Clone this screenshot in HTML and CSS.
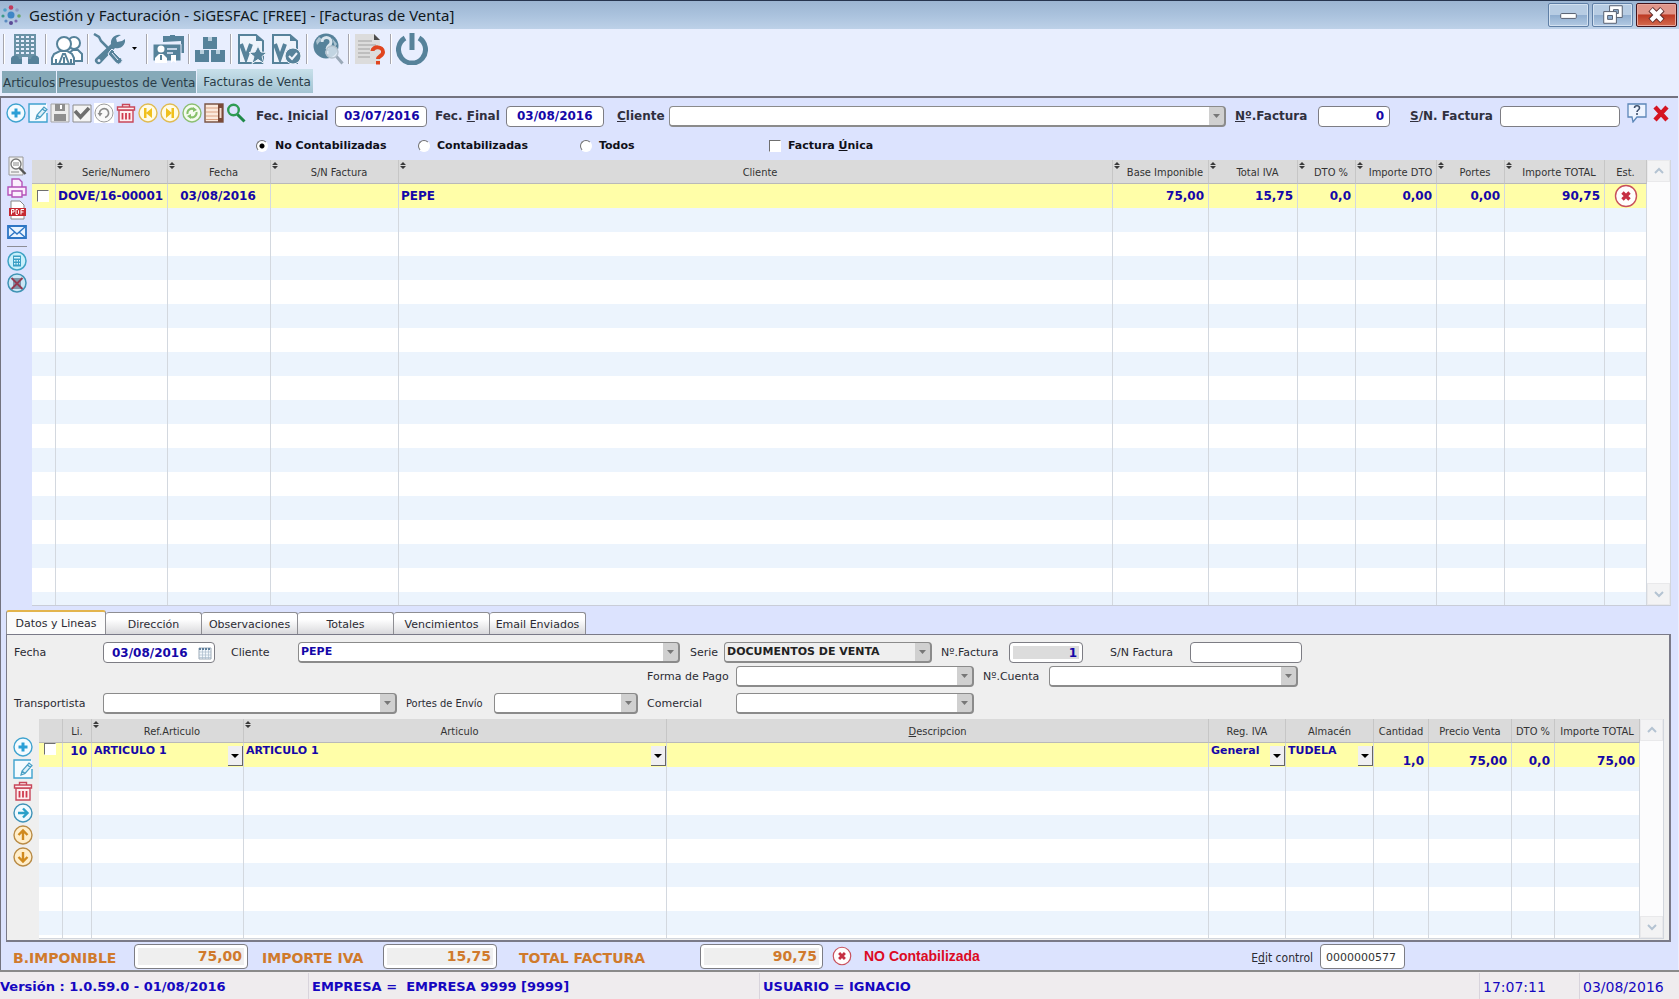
FILE: index.html
```html
<!DOCTYPE html>
<html lang="es">
<head>
<meta charset="utf-8">
<title>Gestión y Facturación - SiGESFAC</title>
<link rel="stylesheet" href="styles.css">
</head>
<body>
<svg class="defs" aria-hidden="true">
  <symbol id="add" viewBox="0 0 20 20"><circle cx="10" cy="10" r="9" fill="#f4fbff" stroke="#3fa3cf" stroke-width="1.4"/><path d="M10 5.500v9M5.500 10h9" stroke="#2b9fd6" stroke-width="3"/></symbol>
  <symbol id="edit" viewBox="0 0 20 20"><path d="M1 1h18v18H1z" fill="#f4fbff"/><path d="M19 10v9H1V1h17" fill="none" stroke="#3fa3cf" stroke-width="1.400"/><path d="M8 16l1-4 7-8 3 2.500-7 8zM9 12l3 2.500M14.500 6l3 2.500" fill="#dff1fa" stroke="#4a9fc4" stroke-width="1.200"/></symbol>
  <symbol id="trash" viewBox="0 0 20 20"><path d="M3 7h14v12H3z" fill="#fdeef0" stroke="#c8475a" stroke-width="1.400"/><path d="M1.500 4h17v3h-17zM6.500 4V1.500h7V4" fill="#fdeef0" stroke="#c8475a" stroke-width="1.400"/><path d="M6.500 10v6.500M10 10v6.500M13.500 10v6.500" stroke="#cf3a4e" stroke-width="1.800"/></symbol>
  <symbol id="nope" viewBox="0 0 24 24"><circle cx="12" cy="12" r="10.500" fill="#fffdfd" stroke="#c8505c" stroke-width="1.400"/><path d="M8.500 8.500l7 7M15.500 8.500l-7 7" stroke="#c62f42" stroke-width="3.400"/></symbol>
</svg>

<header class="titlebar">
  <svg class="logo" viewBox="0 0 20 20"><circle cx="10" cy="10" r="3.500" fill="#3f86c6"/><circle cx="10" cy="2.500" r="2.300" fill="#c23a5c"/><circle cx="10" cy="18" r="2" fill="#5a4a96"/><circle cx="4" cy="5" r="1.800" fill="#4ea0c8"/><circle cx="16" cy="5" r="1.800" fill="#8a9ac4"/><circle cx="2" cy="11" r="1.600" fill="#3c9a8a"/><circle cx="18" cy="11" r="1.800" fill="#6aa66a"/><circle cx="5" cy="16" r="1.600" fill="#5a8ac0"/><circle cx="15" cy="16" r="1.600" fill="#7c6ab0"/></svg>
  <h1 class="title">Gestión y Facturación - SiGESFAC [FREE] - [Facturas de Venta]</h1>
  <button class="win" aria-label="Minimizar"><svg viewBox="0 0 40 22"><rect x="12" y="9.500" width="16" height="5" rx="1" fill="#fff" stroke="#555e6e"/></svg></button>
  <button class="win" aria-label="Restaurar"><svg viewBox="0 0 40 22"><path d="M17 1.500h13v12H17z" fill="#fff" stroke="#555e6e"/><path d="M21 5.500h5v4h-5z" fill="#8fb0d2" stroke="#555e6e"/><path d="M11 7.500h13v12H11z" fill="#fff" stroke="#555e6e"/><path d="M15 11.500h5v4h-5z" fill="#8fb0d2" stroke="#555e6e"/></svg></button>
  <button class="win win-close" aria-label="Cerrar"><svg viewBox="0 0 40 22"><path d="M14 5l12 12M26 5L14 17" stroke="#5a2a2a" stroke-width="6.500"/><path d="M14.500 5.500l11 11M25.500 5.500l-11 11" stroke="#fff" stroke-width="4.400"/></svg></button>
</header>

<nav class="toolbar">
  <i class="sep"></i>
  <button class="tool" aria-label="Empresa"><svg viewBox="0 0 32 32"><path d="M5 1h22v27H5z" fill="#6a92a6"/><path d="M7 3h3v2H7zm5 0h3v2h-3zm5 0h3v2h-3zm5 0h3v2h-3zM7 7h3v2H7zm5 0h3v2h-3zm5 0h3v2h-3zm5 0h3v2h-3zM7 11h3v2H7zm5 0h3v2h-3zm5 0h3v2h-3zm5 0h3v2h-3zM7 15h3v2H7zm5 0h3v2h-3zm5 0h3v2h-3zm5 0h3v2h-3zM7 19h3v2H7zm5 0h3v2h-3zm5 0h3v2h-3zm5 0h3v2h-3zM13 24h6v4h-6z" fill="#e8eefe"/><path d="M2 31v-4a4 4 0 0 1 8-1h3v5zM30 31v-4a4 4 0 0 0-8-1h-3v5z" fill="#56829a"/></svg></button>
  <i class="sep"></i>
  <button class="tool" aria-label="Clientes"><svg viewBox="0 0 32 32" fill="#fff" stroke="#56829a" stroke-width="2"><path d="M16 28l2-8 4-3h5l4 4v7z"/><circle cx="23" cy="10" r="6"/><path d="M1 31v-6l2-4 6-3h7l5 3 2 4v6z"/><circle cx="13" cy="11" r="7"/><path d="M8 31l4-10 2 0 4 10M13 24v7M5 26v5M20 26v5" fill="none"/></svg></button>
  <i class="sep"></i>
  <button class="tool" aria-label="Herramientas"><svg viewBox="0 0 32 32"><path d="M29 8l-5 1-1-4 5-3a8 8 0 0 0-10 9L3 25a3.500 3.500 0 0 0 5 5l14-15a8 8 0 0 0 10-9zM6 29a1.500 1.500 0 1 1 0-3 1.500 1.500 0 0 1 0 3z" fill="#56829a"/><path d="M1 1l5 3 2 4 8 8" fill="none" stroke="#56829a" stroke-width="2.500"/><path d="M17 18l2-2 9 9a3.500 3.500 0 0 1-5 5l-8-9z" fill="#56829a" stroke="#e8eefe"/><path d="M19 20l6 7M21 19l6 6" stroke="#e8eefe"/></svg></button>
  <button class="drop" aria-label="Más herramientas"><svg viewBox="0 0 8 5"><path d="M1 0h5L3.500 3z"/></svg></button>
  <i class="sep"></i>
  <button class="tool" aria-label="Fichas"><svg viewBox="0 0 32 32"><path d="M11 9V3h7V2h5v1h9v17h-3V8z" fill="#56829a"/><path d="M1 11h28v17H1z" fill="#56829a" stroke="#e8eefe"/><path d="M15 16h10M15 20h6" stroke="#e8eefe" stroke-width="1.500"/><circle cx="9" cy="16" r="3.500" fill="#fff"/><path d="M3 30v-5l4-4h4l4 4v5zM19 22h5v8l-2.500-2L19 30z" fill="#fff"/><path d="M9 22v5" stroke="#56829a" stroke-width="2"/></svg></button>
  <i class="sep"></i>
  <button class="tool" aria-label="Artículos"><svg viewBox="0 0 32 32"><path d="M9 4h14v12H9zM1 17h14v12H1zM17 17h14v12H17z" fill="#56829a"/><path d="M14 4h4v4h-4zM6 17h4v4H6zM22 17h4v4h-4z" fill="#b9cfdd"/></svg></button>
  <i class="sep"></i>
  <button class="tool" aria-label="Presupuestos"><svg viewBox="0 0 32 32"><path d="M3 2h17l7 6v22H3z" fill="#edf3fb" stroke="#56829a" stroke-width="2"/><path d="M20 2v6h7" fill="#56829a"/><path d="M5 11l5 14 5-14" fill="none" stroke="#56829a" stroke-width="4"/><path d="M22 13l3 6 6 .5-5 4 2 7-6-4-6 4 2-7-5-4 6-.5z" fill="#56829a" stroke="#edf3fb"/></svg></button>
  <button class="tool" aria-label="Facturas"><svg viewBox="0 0 32 32"><path d="M3 2h17l7 6v22H3z" fill="#edf3fb" stroke="#56829a" stroke-width="2"/><path d="M20 2v6h7" fill="#56829a"/><path d="M5 11l5 14 5-14" fill="none" stroke="#56829a" stroke-width="4"/><circle cx="23" cy="23" r="8" fill="#56829a" stroke="#edf3fb"/><path d="M19 23l3 3 5-6" fill="none" stroke="#edf3fb" stroke-width="2"/></svg></button>
  <i class="sep"></i>
  <button class="tool" aria-label="Consultas"><svg viewBox="0 0 32 32"><circle cx="14" cy="13" r="12.500" fill="#56829a"/><path d="M4 8l3-4 3 2-5 6zM20 5l5 6-2 3z" fill="#a9c2d0"/><path d="M10 9c0-6 9-6 9 0 0 4-4 3-4 7M15 18v3" fill="none" stroke="#dbe6ee" stroke-width="3"/><circle cx="20" cy="19" r="6" fill="#dde9f2" fill-opacity=".8" stroke="#b7c4cf" stroke-width="1.500"/><path d="M24.500 23.500l6 7" stroke="#9aa9b8" stroke-width="3"/></svg></button>
  <i class="sep"></i>
  <button class="tool" aria-label="Ayuda"><svg viewBox="0 0 32 32"><path d="M1 1h19l6 6v24H1z" fill="#dcdcdc"/><path d="M20 1v6h6z" fill="#4c4c4c"/><path d="M4 8h14M4 12h18M4 16h12M4 20h12M4 24h12" stroke="#b4b4b4" stroke-width="1.500"/><path d="M18.500 18c0-5 10.500-5 10.500 1 0 4-5 4-5 7" fill="none" stroke="#e0451f" stroke-width="4"/><path d="M22 28h4v3.500h-4z" fill="#e0451f"/></svg></button>
  <i class="sep"></i>
  <button class="tool" aria-label="Salir"><svg viewBox="0 0 32 32"><path d="M9 5a13.500 13.500 0 1 0 14 0" fill="none" stroke="#56829a" stroke-width="5"/><path d="M16 0v17" stroke="#56829a" stroke-width="5"/></svg></button>
</nav>

<nav class="doctabs">
  <button class="doctab">Articulos</button>
  <button class="doctab">Presupuestos de Venta</button>
  <button class="doctab doctab-on">Facturas de Venta</button>
</nav>

<main class="work">
  <section class="filters">
    <div class="icons">
      <button class="ico" aria-label="Nuevo"><svg><use href="#add"/></svg></button>
      <button class="ico" aria-label="Editar"><svg><use href="#edit"/></svg></button>
      <button class="ico" aria-label="Guardar"><svg viewBox="0 0 20 20"><path d="M1 1h18v18H1z" fill="#ececec" stroke="#a5a5a5"/><path d="M5 1h10v7H5zM4 11h12v7H4z" fill="#8f8f8f"/><path d="M10 2h2v4h-2z" fill="#fff"/></svg></button>
      <button class="ico" aria-label="Aceptar"><svg viewBox="0 0 20 20"><path d="M1 2h18v17H1z" fill="#f4f4f4" stroke="#8d8d8d"/><path d="M3 8l5.500 6L17 5" fill="none" stroke="#6e6e6e" stroke-width="3.600"/></svg></button>
      <button class="ico" aria-label="Deshacer"><svg viewBox="0 0 20 20"><path d="M0 0h20v20H0z" fill="#fff"/><circle cx="10" cy="10" r="9" fill="#fafafa" stroke="#9b9b9b"/><path d="M6 12a4.500 4.500 0 1 1 5 2.500" fill="none" stroke="#8b8b8b" stroke-width="1.600"/><path d="M3.500 10h5L6 13.500z" fill="#8b8b8b"/></svg></button>
      <button class="ico" aria-label="Eliminar"><svg><use href="#trash"/></svg></button>
      <button class="ico" aria-label="Primero"><svg viewBox="0 0 20 20"><circle cx="10" cy="10" r="9" fill="#fffbe6" stroke="#e0bb52" stroke-width="1.400"/><path d="M6 5h2.500v10H6zM14 5v10l-6-5z" fill="#f0c01e"/></svg></button>
      <button class="ico" aria-label="Último"><svg viewBox="0 0 20 20"><circle cx="10" cy="10" r="9" fill="#fffbe6" stroke="#e0bb52" stroke-width="1.400"/><path d="M11.500 5H14v10h-2.500zM6 5v10l6-5z" fill="#f0c01e"/></svg></button>
      <button class="ico" aria-label="Refrescar"><svg viewBox="0 0 20 20"><circle cx="10" cy="10" r="9" fill="#f5fbf0" stroke="#8cbf72" stroke-width="1.400"/><path d="M5.500 11a4.500 4.500 0 0 1 7-4.500M14.500 9a4.500 4.500 0 0 1-7 4.500" fill="none" stroke="#86c06a" stroke-width="2"/><path d="M11 4l4 3-4 2zM9 16l-4-3 4-2z" fill="#86c06a"/></svg></button>
      <button class="ico" aria-label="Columnas"><svg viewBox="0 0 20 20"><path d="M1 1h18v18H1z" fill="#fbe9dc" stroke="#7b5646" stroke-width="1.400"/><path d="M2 5h12M2 9h12M2 13h12M2 16.500h12" stroke="#dba182" stroke-width="1.200"/><path d="M14 1h5v18h-5z" fill="#7b4a38"/><path d="M15.500 5h2v10h-2z" fill="#f3ddd0"/></svg></button>
      <button class="ico" aria-label="Buscar"><svg viewBox="0 0 20 20"><circle cx="7.500" cy="7" r="5.300" fill="none" stroke="#2f9c53" stroke-width="2.400"/><path d="M11.500 11.500l7 7" stroke="#1f8a48" stroke-width="3"/></svg></button>
    </div>
    <label class="lb lb-fi" for="fi">Fec. <u>I</u>nicial</label>
    <input class="box w-date" id="fi" value="03/07/2016">
    <label class="lb lb-ff" for="ff">Fec. <u>F</u>inal</label>
    <input class="box w-date2" id="ff" value="03/08/2016">
    <label class="lb lb-cl" for="cl"><u>C</u>liente</label>
    <select class="box combo grow" id="cl"><option></option></select>
    <label class="lb lb-nf" for="nf"><u>N</u>º.Factura</label>
    <input class="box w-num num" id="nf" value="0">
    <label class="lb lb-sn" for="sn"><u>S</u>/N. Factura</label>
    <input class="box w-sn" id="sn">
    <button class="ico" aria-label="Ayuda"><svg viewBox="0 0 20 20"><path d="M1 1h18v13h-9l-4 5-1-5H1z" fill="#eef4ff" stroke="#5c87b8" stroke-width="1.300"/><path d="M7.500 5c0-3 5-3 5 0 0 2-2.500 2-2.500 4M10 10v2" fill="none" stroke="#3d4f6c" stroke-width="1.600"/></svg></button>
    <button class="ico" aria-label="Cerrar"><svg viewBox="0 0 20 20"><path d="M4 4l12 13M16 4L4 17" stroke="#d41522" stroke-width="4.400"/></svg></button>
  </section>

  <section class="options">
    <label class="opt opt-a"><input type="radio" name="estado" checked>No Contabilizadas</label>
    <label class="opt opt-b"><input type="radio" name="estado">Contabilizadas</label>
    <label class="opt opt-c"><input type="radio" name="estado">Todos</label>
    <label class="opt"><input type="checkbox"><span>Factura <u>Ú</u>nica</span></label>
  </section>

  <section class="listing">
    <div class="side side-top">
      <button class="ico" aria-label="Vista previa"><svg viewBox="0 0 20 20"><path d="M2 1h14v18H2z" fill="#f3f3f3" stroke="#999"/><circle cx="9" cy="8" r="5" fill="#fff" stroke="#777" stroke-width="1.300"/><path d="M6 7h6M6 9h6M4 16h8" stroke="#888"/><path d="M12.500 12l6 6" stroke="#555" stroke-width="2.400"/></svg></button>
      <button class="ico" aria-label="Imprimir"><svg viewBox="0 0 20 20" fill="#fbeefd" stroke="#b452b8" stroke-width="1.400"><path d="M5 9V1h7l3 3v5M1 9h18v8H1z"/><path d="M5 13h10v6H5z"/></svg></button>
      <button class="ico" aria-label="PDF"><svg viewBox="0 0 20 20"><path d="M4 1h9l4 4v14H4z" fill="#fff" stroke="#888"/><path d="M2 8h17v8H2z" fill="#c62a33"/><path d="M4.500 14.500v-5h2.500v2.500H4.500M9 9.500h1.500l1 1v3l-1 1H9zM14 14.500v-5h3M14 12h2.500" fill="none" stroke="#fff"/></svg></button>
      <button class="ico" aria-label="Correo"><svg viewBox="0 0 20 20"><path d="M1 4h18v12H1z" fill="#eaf4ff" stroke="#2e76c4" stroke-width="1.800"/><path d="M1 4l9 8 9-8M1 16l7-6M19 16l-7-6" fill="none" stroke="#2e76c4" stroke-width="1.400"/></svg></button>
      <i class="rule"></i>
      <button class="ico" aria-label="Contabilizar"><svg viewBox="0 0 20 20"><circle cx="10" cy="10" r="9" fill="#c9f0fb" stroke="#3fa3c4" stroke-width="1.500"/><path d="M6 4.500h8v11H6z" fill="#3a9fc4"/><path d="M7 6h6v1.500H7zM7 9h1.500v1.500H7zm2.500 0H11v1.500H9.500zm2.500 0h1v1.500h-1zM7 12h1.500v1.500H7zm2.500 0H11v1.500H9.500zm2.500 0h1v1.500h-1z" fill="#d9f4fc"/></svg></button>
      <button class="ico" aria-label="Descontabilizar"><svg viewBox="0 0 20 20"><circle cx="10" cy="10" r="9" fill="#c9e6f5" stroke="#3f93b4" stroke-width="1.500"/><path d="M6 5h8v11H6z" fill="#8094a8"/><path d="M4.500 5l11 11M15.500 5l-11 11" stroke="#943a50" stroke-width="1.800"/></svg></button>
    </div>
    <div class="gridwrap">
      <table class="grid">
        <colgroup><col class="c24"><col class="c112"><col class="c103"><col class="c128"><col><col class="c96"><col class="c89"><col class="c58"><col class="c81"><col class="c68"><col class="c100"><col class="c42"></colgroup>
        <thead><tr><th></th><th class="sort">Serie/Numero</th><th class="sort">Fecha</th><th class="sort">S/N Factura</th><th class="sort">Cliente</th><th class="sort">Base Imponible</th><th class="sort">Total IVA</th><th class="sort">DTO %</th><th class="sort">Importe DTO</th><th class="sort">Portes</th><th class="sort">Importe TOTAL</th><th>Est.</th></tr></thead>
        <tbody>
          <tr class="sel"><td><input type="checkbox" aria-label="Marcar factura"></td><td>DOVE/16-00001</td><td class="mid">03/08/2016</td><td></td><td>PEPE</td><td class="num">75,00</td><td class="num">15,75</td><td class="num">0,0</td><td class="num">0,00</td><td class="num">0,00</td><td class="num">90,75</td><td class="state"><svg><use href="#nope"/></svg></td></tr>
          <tr class="fill"><td></td><td></td><td></td><td></td><td></td><td></td><td></td><td></td><td></td><td></td><td></td><td></td></tr>
        </tbody>
      </table>
      <div class="scroll"><button aria-label="Subir"><svg viewBox="0 0 10 8"><path d="M1 6l4-4 4 4"/></svg></button><button aria-label="Bajar"><svg viewBox="0 0 10 8"><path d="M1 2l4 4 4-4"/></svg></button></div>
    </div>
  </section>

  <nav class="tabs">
    <button class="tab tab-on">Datos y Lineas</button><button class="tab">Dirección</button><button class="tab">Observaciones</button><button class="tab">Totales</button><button class="tab">Vencimientos</button><button class="tab">Email Enviados</button>
  </nav>

  <section class="panel">
    <div class="form">
      <div class="row">
        <label class="fl fl-a" for="fe">Fecha</label>
        <span class="box datebox w-112"><input id="fe" value="03/08/2016"><svg viewBox="0 0 14 14"><path d="M1 2h12v11H1z" fill="#f3f8fc" stroke="#9dabb8"/><path d="M1 3h12" stroke="#5f7f9c" stroke-width="2" stroke-dasharray="2 1"/><path d="M1 6h12M1 9h12M1 11.500h12M4.500 4v9M7.500 4v9M10.500 4v9" stroke="#a9bccb" stroke-width=".7"/></svg></span>
        <label class="fl fl-b" for="c2">Cliente</label>
        <select class="box combo w-382" id="c2"><option>PEPE</option></select>
        <label class="fl fl-c" for="se">Serie</label>
        <select class="box combo combo-gray w-208" id="se"><option>DOCUMENTOS DE VENTA</option></select>
        <label class="fl fl-d" for="n2">Nº.Factura</label>
        <input class="box framed w-74 num" id="n2" value="1">
        <label class="fl fl-e" for="s2">S/N Factura</label>
        <input class="box w-112" id="s2">
      </div>
      <div class="row row-mid">
        <label class="fl fl-f" for="fp">Forma de Pago</label>
        <select class="box combo w-238" id="fp"><option></option></select>
        <label class="fl fl-g" for="cu">Nº.Cuenta</label>
        <select class="box combo w-249" id="cu"><option></option></select>
      </div>
      <div class="row">
        <label class="fl fl-a" for="tr">Transportista</label>
        <select class="box combo w-294" id="tr"><option></option></select>
        <label class="fl fl-h" for="po">Portes de Envío</label>
        <select class="box combo w-144" id="po"><option></option></select>
        <label class="fl fl-i" for="co">Comercial</label>
        <select class="box combo w-238" id="co"><option></option></select>
      </div>
    </div>
    <div class="lines">
      <div class="side side-low">
        <button class="ico" aria-label="Nueva línea"><svg><use href="#add"/></svg></button>
        <button class="ico" aria-label="Editar línea"><svg><use href="#edit"/></svg></button>
        <button class="ico" aria-label="Eliminar línea"><svg><use href="#trash"/></svg></button>
        <button class="ico" aria-label="Insertar"><svg viewBox="0 0 20 20"><circle cx="10" cy="10" r="9" fill="#f0faff" stroke="#3f93b8" stroke-width="1.400"/><path d="M5 10h9M10 5.500l4.500 4.500-4.500 4.500" fill="none" stroke="#2ba0c8" stroke-width="2.400"/></svg></button>
        <button class="ico" aria-label="Subir línea"><svg viewBox="0 0 20 20"><circle cx="10" cy="10" r="9" fill="#ffeecb" stroke="#b98b45" stroke-width="1.400"/><path d="M10 15V6M5.500 10L10 5.500l4.500 4.500" fill="none" stroke="#d08a1e" stroke-width="2.400"/></svg></button>
        <button class="ico" aria-label="Bajar línea"><svg viewBox="0 0 20 20"><circle cx="10" cy="10" r="9" fill="#ffeecb" stroke="#b98b45" stroke-width="1.400"/><path d="M10 5v9M5.500 10l4.500 4.500 4.500-4.500" fill="none" stroke="#d08a1e" stroke-width="2.400"/></svg></button>
      </div>
      <div class="gridwrap">
        <table class="grid grid-low">
          <colgroup><col class="c24"><col class="c29"><col class="c152"><col class="c423"><col><col class="c77"><col class="c88"><col class="c55"><col class="c83"><col class="c43"><col class="c85"></colgroup>
          <thead><tr><th></th><th>Li.</th><th class="sort">Ref.Articulo</th><th class="sort">Articulo</th><th><u>D</u>escripcion</th><th>Reg. IVA</th><th>Almacén</th><th>Cantidad</th><th>Precio Venta</th><th>DTO %</th><th>Importe TOTAL</th></tr></thead>
          <tbody>
            <tr class="sel"><td class="up"><input type="checkbox" aria-label="Marcar línea"></td><td class="num up line">10</td><td class="up"><select class="cell" aria-label="Referencia"><option>ARTICULO 1</option></select></td><td class="up"><select class="cell" aria-label="Artículo"><option>ARTICULO 1</option></select></td><td></td><td class="up"><select class="cell" aria-label="Régimen de IVA"><option>General</option></select></td><td class="up"><select class="cell" aria-label="Almacén"><option>TUDELA</option></select></td><td class="num low">1,0</td><td class="num low">75,00</td><td class="num low">0,0</td><td class="num low">75,00</td></tr>
            <tr class="fill"><td></td><td></td><td></td><td></td><td></td><td></td><td></td><td></td><td></td><td></td><td></td></tr>
          </tbody>
        </table>
        <div class="scroll"><button aria-label="Subir"><svg viewBox="0 0 10 8"><path d="M1 6l4-4 4 4"/></svg></button><button aria-label="Bajar"><svg viewBox="0 0 10 8"><path d="M1 2l4 4 4-4"/></svg></button></div>
      </div>
    </div>
  </section>

  <section class="totals">
    <label class="tl tl-a" for="t1">B.IMPONIBLE</label>
    <input class="box total w-114" id="t1" value="75,00" readonly>
    <label class="tl tl-b" for="t2">IMPORTE IVA</label>
    <input class="box total w-114" id="t2" value="15,75" readonly>
    <label class="tl tl-c" for="t3">TOTAL FACTURA</label>
    <input class="box total w-123" id="t3" value="90,75" readonly>
    <svg class="flag"><use href="#nope"/></svg>
    <strong class="notice">NO Contabilizada</strong>
    <label class="fl ec" for="ec">E<u>d</u>it control</label>
    <input class="box code" id="ec" value="0000000577">
  </section>
</main>

<footer class="status">
  <span class="st st-a">Versión : 1.0.59.0 - 01/08/2016</span>
  <span class="st st-b">EMPRESA =&nbsp; EMPRESA 9999 [9999]</span>
  <span class="st st-c">USUARIO = IGNACIO</span>
  <time class="st st-d">17:07:11</time>
  <time class="st st-d">03/08/2016</time>
</footer>
</body>
</html>
```
FILE: styles.css
```css
* { box-sizing: border-box; }

body {
  margin: 0;
  height: 100vh;
  display: flex;
  flex-direction: column;
  overflow: hidden;
  background: #e8eefe;
  color: #2b2b33;
  font: 11px/16px "DejaVu Sans", Verdana, sans-serif;
}

button, input, select { font: inherit; color: inherit; margin: 0; padding: 0; }
button { border: 0; background: none; }
svg { display: block; }
.defs { position: absolute; width: 0; height: 0; }

/* Title bar */
.titlebar {
  display: flex;
  align-items: center;
  gap: 3px;
  height: 29px;
  padding: 0 2px 0 1px;
  border-top: 1px solid #26344e;
  background: linear-gradient(#9cb5d2, #aac2dd 50%, #bdd1e8);
}
.logo { width: 20px; height: 20px; }
.title {
  flex: 1;
  margin: 0;
  padding-left: 5px;
  font: 15px/20px "Noto Sans", "Open Sans", sans-serif;
  color: #101820;
}
.win {
  width: 41px;
  height: 24px;
  border: 1px solid #5f7fa6;
  border-radius: 2px;
  box-shadow: inset 0 0 0 1px #d3e1f0;
  background: linear-gradient(#b7cce3 50%, #8fadcf 50%, #b3cae3);
}
.win svg { width: 39px; height: 22px; }
.win-close {
  border-color: #43131a;
  box-shadow: inset 0 0 0 1px #e9a79c;
  background: linear-gradient(#e0968a 45%, #bd3a24 50%, #d46c50);
}

/* Main toolbar */
.toolbar { display: flex; align-items: center; height: 40px; padding: 0 2px; }
.tool { width: 34px; padding: 1px; }
.tool svg { width: 32px; height: 32px; }
.drop { width: 17px; padding-left: 5px; }
.drop svg { width: 8px; height: 5px; }
.sep { width: 2px; height: 30px; margin: 0 3px; border-left: 1px solid #a6a6ae; border-right: 1px solid #fff; }
.sep:first-child { margin-left: 1px; }

.doctabs { display: flex; align-items: flex-end; gap: 1px; height: 27px; padding: 0 2px 3px; }
.doctab { height: 22px; padding: 1px 1px 0; background: #86a9b8; color: #2a3d48; font-size: 12px; }
.doctab-on { height: 24px; padding: 1px 2px 0 6px; background: linear-gradient(#c8e0ea, #a3c3d2); }

/* Workspace */
.work {
  flex: 1;
  min-height: 0;
  display: flex;
  flex-direction: column;
  margin-right: 1px;
  padding: 0 7px 0 5px;
  border-top: 2px solid #73737f;
  border-left: 1px solid #73737f;
  background: #dce3fe;
}

.box {
  height: 21px;
  min-width: 0;
  border: 1px solid #7d7d84;
  border-radius: 4px;
  background: #fff;
  color: #1507a8;
  font-weight: bold;
  font-size: 12px;
  padding: 0 5px;
}
.combo {
  appearance: none;
  border-right-width: 2px;
  border-bottom-width: 2px;
  border-color: #8b8b8b;
  padding: 0 18px 0 2px;
  font-size: 11px;
  background: #fff url('data:image/svg+xml,<svg xmlns="http://www.w3.org/2000/svg" width="15" height="18"><path d="M0 0h15v18H0z" fill="%23d0d0d0"/><path d="M4 7h7l-3.5 4z" fill="%23777"/></svg>') right center no-repeat;
}
.combo-gray { background-color: #efefef; color: #222; }
.num { text-align: right; }
.grow { flex: 1; }

.filters { display: flex; align-items: center; height: 36px; }
.icons { display: flex; gap: 2px; width: 250px; margin-top: -6px; }
.ico { width: 20px; height: 20px; flex: none; }
.ico svg { width: 20px; height: 20px; }
.lb { flex: none; font-weight: bold; font-size: 12px; color: #30303e; white-space: nowrap; }
.box + .ico { margin: 0 4px 0 7px; }
.filters > .ico { align-self: flex-start; margin-top: 5px; }
.lb-fi { width: 79px; } .lb-ff { width: 79px; padding-left: 8px; }
.lb-cl { width: 65px; padding-left: 13px; } .lb-nf { width: 92px; padding-left: 9px; }
.lb-sn { width: 110px; padding-left: 20px; }
.w-date { width: 92px; padding: 0 0 0 8px; }
.w-date2 { width: 98px; padding: 0 0 0 10px; }
.w-num { width: 72px; }
.w-sn { width: 120px; }
.box.w-sn + .ico { margin-top: 5px; }

.options { display: flex; align-items: center; height: 25px; padding: 0 0 2px 250px; }
.opt { display: flex; align-items: center; gap: 7px; font-weight: bold; color: #101018; white-space: nowrap; }
.opt input, .grid input {
  appearance: none;
  width: 12px;
  height: 12px;
  flex: none;
  border: 1px solid;
  border-color: #6f6f6f #fff #fff #6f6f6f;
  background: #fff;
}
.opt input[type=radio] { border-radius: 50%; }
.opt input:checked { background: radial-gradient(#000 2px, #fff 3px); }
.opt-a, .opt-b { width: 162px; }
.opt-c { width: 189px; }

/* Data grids */
.listing { flex: 1; min-height: 0; display: flex; }
.side { display: flex; flex-direction: column; flex: none; }
.side-top { width: 26px; gap: 2px; margin-top: -3px; padding-left: 1px; }
.rule { width: 20px; height: 1px; margin: 2px 0; background: #8d8d95; }
.gridwrap { flex: 1; min-width: 0; display: flex; border: solid #d2d6dd; border-width: 0 1px 1px 0; }
.side-top + .gridwrap { margin: 1px 0 0; border-bottom: 1px solid #c9cdd8; }
.grid { flex: 1; width: 100%; height: 100%; table-layout: fixed; border-collapse: separate; border-spacing: 0; }
.grid th {
  position: relative;
  height: 24px;
  padding: 2px 0 0;
  border-right: 1px solid #c6c6c6;
  border-bottom: 1px solid #b9b9b9;
  background: #dadada;
  font: 11px/16px "DejaVu Sans Condensed", "DejaVu Sans", sans-serif;
  color: #333;
  white-space: nowrap;
}
.grid th.sort { padding-left: 9px; }
.sort::before {
  content: "";
  position: absolute;
  left: 1px;
  top: 2px;
  width: 6px;
  height: 7px;
  background: #3a3a3a;
  clip-path: polygon(50% 0, 100% 42%, 50% 42%, 50% 58%, 100% 58%, 50% 100%, 0 58%, 50% 58%, 50% 42%, 0 42%);
}
.grid td { height: 24px; padding: 0 4px 0 2px; border-right: 1px solid #d3d8df; white-space: nowrap; }
.sel td { background: #fffea8; color: #1507a8; font-weight: bold; font-size: 12px; }
.grid .sel td:first-child { padding-left: 5px; }
.grid input { display: block; }
.grid .mid { text-align: center; }
.grid .state { padding: 0 9px; }
.state svg { width: 24px; height: 24px; }
.fill { background: repeating-linear-gradient(#ecf4fd 0 24px, #fff 24px 48px); }
.grid .fill td { height: auto; }
.grid .up { vertical-align: top; padding-right: 0; }
.grid .line { padding-right: 4px; }
.grid .low { vertical-align: bottom; line-height: 12px; }
.cell {
  appearance: none;
  display: block;
  width: 100%;
  height: 23px;
  padding-bottom: 8px;
  border: 0;
  font-size: 11px;
  background: url('data:image/svg+xml,<svg xmlns="http://www.w3.org/2000/svg" width="15" height="20"><path d="M0 0h15v20H0z" fill="%23666"/><path d="M0 0h14v19H0z" fill="%23efeff2"/><path d="M3 8h8l-4 4z"/></svg>') right bottom no-repeat;
}
.c24 { width: 24px; } .c29 { width: 29px; } .c42 { width: 42px; }
.c43 { width: 43px; } .c55 { width: 55px; } .c58 { width: 58px; } .c68 { width: 68px; }
.c77 { width: 77px; } .c81 { width: 81px; } .c83 { width: 83px; } .c85 { width: 85px; }
.c88 { width: 88px; } .c89 { width: 89px; } .c96 { width: 96px; } .c100 { width: 100px; }
.c103 { width: 103px; } .c112 { width: 112px; } .c128 { width: 128px; } .c152 { width: 152px; }
.c423 { width: 423px; }
.scroll { display: flex; flex-direction: column; justify-content: space-between; width: 23px; flex: none; background: #fcfcfd; }
.scroll button { height: 22px; padding: 0 6px; background: #f3f3f4; border: 1px solid #e9e9eb; }
.scroll svg { width: 10px; height: 8px; fill: none; stroke: #b4c3d2; stroke-width: 2; }

/* Detail tabs */
.tabs { display: flex; align-items: flex-end; margin-top: 4px; height: 24px; }
.tab {
  width: 96px;
  height: 22px;
  padding-top: 2px;
  border: 1px solid #8e8e93;
  border-left-width: 0;
  border-bottom: 0;
  border-radius: 3px 3px 0 0;
  background: linear-gradient(#fff 30%, #d9d9dc);
  white-space: nowrap;
}
.tab-on { width: 100px; height: 24px; border-top: 2px solid #e3b44c; border-left-width: 1px; background: #fbfbfb; }

.panel {
  display: flex;
  flex-direction: column;
  border: 1px solid #7a7a88;
  border-right-width: 2px;
  border-bottom-width: 2px;
  background: #efefef;
}
.form { display: flex; flex-direction: column; gap: 6px; padding: 7px 7px 5px; }
.row { display: flex; align-items: center; }
.row-mid { margin: -3px 0 0 633px; }
.fl { flex: none; font-size: 11px; white-space: nowrap; }
.fl-a { width: 89px; } .fl-b { width: 83px; padding-left: 16px; }
.fl-c { width: 44px; padding-left: 10px; } .fl-d { width: 77px; padding-left: 9px; }
.fl-e { width: 107px; padding-left: 27px; } .fl-f { width: 89px; }
.fl-g { width: 75px; padding-left: 9px; } .fl-i { width: 98px; padding-left: 9px; }
.fl-h { width: 97px; padding-left: 9px; font-family: "DejaVu Sans Condensed", "DejaVu Sans", sans-serif; }
.w-74 { width: 74px; } .w-112 { width: 112px; } .w-114 { width: 114px; } .w-123 { width: 123px; }
.w-144 { width: 144px; } .w-208 { width: 208px; } .w-238 { width: 238px; }
.w-249 { width: 249px; } .w-294 { width: 294px; } .w-382 { width: 382px; }
.datebox { display: flex; align-items: center; padding: 0 2px 0 8px; }
.datebox input { flex: 1; min-width: 0; border: 0; background: none; }
.datebox svg { width: 14px; height: 14px; flex: none; }
.framed { background: #dcdcdc; box-shadow: inset 0 0 0 3px #fff; }

.lines { display: flex; height: 221px; padding: 0 5px 1px 0; }
.side-low { width: 32px; padding: 18px 0 0 6px; gap: 2px; }

/* Totals */
.totals { display: flex; align-items: center; height: 28px; padding: 0 0 0 7px; }
.tl { flex: none; padding-top: 3px; font-weight: bold; font-size: 14px; color: #d07a2c; white-space: nowrap; }
.tl-a { width: 121px; } .tl-b { width: 135px; padding-left: 14px; }
.tl-c { width: 203px; padding-left: 22px; }
.total { height: 25px; font-size: 14px; text-align: right; color: #d07a2c; background: #efefef; box-shadow: inset 0 0 0 3px #fff; }
.flag { width: 20px; height: 20px; margin: 0 12px 0 9px; }
.notice { flex: 1; font: bold 14px/16px "Liberation Sans", Arial, sans-serif; color: #dc0a24; }
.ec { padding: 3px 7px 0 0; font-size: 12px; font-family: "DejaVu Sans Condensed", "DejaVu Sans", sans-serif; }
.code { width: 85px; height: 25px; margin-right: 266px; padding-top: 2px; font-weight: normal; font-size: 11px; color: #333; }

/* Status bar */
.status { display: flex; height: 29px; padding-top: 1px; border-top: 2px solid #8a8a8a; background: #efecee; }
.st { padding: 0 3px; border-left: 1px solid #d8d4dc; font: bold 13px/28px "DejaVu Sans", sans-serif; color: #1507c0; white-space: nowrap; }
.st-a { width: 308px; padding: 0; border: 0; } .st-b { width: 451px; } .st-c { flex: 1; }
.st-d { width: 100px; font: 14px/28px "DejaVu Sans", sans-serif; }
```
